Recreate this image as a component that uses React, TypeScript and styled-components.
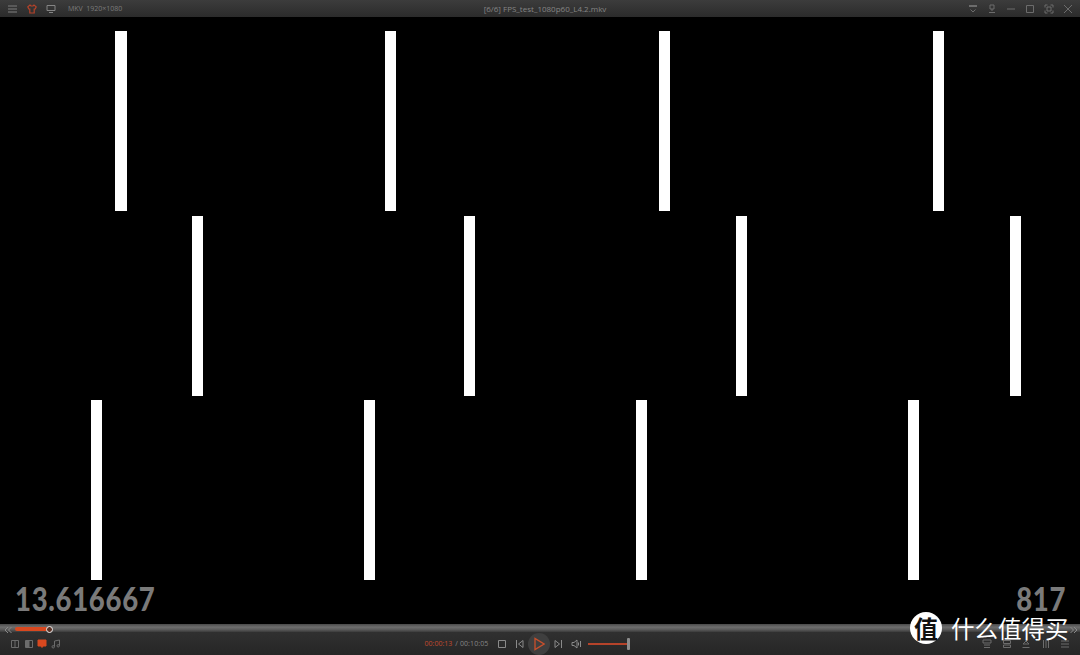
import React from 'react'
import styled, { createGlobalStyle } from 'styled-components'

const GlobalStyle = createGlobalStyle`
  html, body {
    margin: 0;
    padding: 0;
    background: #000;
  }
`

const Window = styled.div`
  width: 1080px;
  height: 655px;
  display: flex;
  flex-direction: column;
  overflow: hidden;
  position: relative;
  font-family: "Open Sans", "Liberation Sans", sans-serif;
`

const TitleBar = styled.div`
  height: 17px;
  flex: none;
  display: grid;
  grid-template-columns: 1fr auto 1fr;
  align-items: center;
  background: linear-gradient(#3c3c3c, #2b2b2b);
  color: #7c7c7c;
  font-size: 7px;
`

const TitleLeft = styled.div`
  display: flex;
  align-items: center;
  padding-left: 7px;
  gap: 9px;
`

const TitleName = styled.div`
  font-size: 8px;
  color: #858585;
  padding-left: 10px;
  white-space: nowrap;
`

const TitleRight = styled.div`
  display: flex;
  align-items: center;
  justify-content: flex-end;
  padding-right: 7px;
  gap: 9px;
`

const Meta = styled.span<{ $gap: number }>`
  margin-left: ${p => p.$gap}px;
  white-space: nowrap;
`

const Video = styled.div`
  flex: 1;
  background: #000;
  position: relative;
`

const Bar = styled.div<{ $x: number; $top: number; $w?: number }>`
  position: absolute;
  left: ${p => p.$x}px;
  top: ${p => p.$top}px;
  width: ${p => p.$w || 11}px;
  height: 180px;
  background: #fff;
`

const Readout = styled.div<{ $side: 'left' | 'right' }>`
  position: absolute;
  bottom: 13px;
  ${p => (p.$side === 'left' ? 'left: 15px;' : 'right: 14px;')}
  transform: scaleX(0.86);
  transform-origin: ${p => p.$side} center;
  font-family: Lato, "Liberation Sans", sans-serif;
  font-weight: 900;
  font-size: 32px;
  line-height: 24px;
  letter-spacing: 0.8px;
  color: #7a7a7a;
`

const Track = styled.div`
  height: 8px;
  flex: none;
  position: relative;
  background: linear-gradient(#4a4a4a 0, #6e6e6e 40%, #5a5a5a 70%, #3c3c3c 100%);
`

const Played = styled.div`
  position: absolute;
  left: 15px;
  top: 3px;
  width: 33px;
  height: 4px;
  border-radius: 2px;
  background: #d9481f;
`

const Knob = styled.div`
  position: absolute;
  left: 46px;
  top: 2px;
  width: 5px;
  height: 5px;
  box-sizing: content-box;
  border: 1px solid #eee;
  border-radius: 50%;
  background: #5a3226;
`

const Chevrons = styled.span<{ $side: 'left' | 'right' }>`
  position: absolute;
  top: 2px;
  ${p => (p.$side === 'left' ? 'left: 4px;' : 'right: 2px;')}
  display: flex;
`

const Controls = styled.div`
  height: 23px;
  flex: none;
  display: grid;
  grid-template-columns: 1fr auto 1fr;
  align-items: center;
  background: linear-gradient(#303030, #262626);
`

const ControlsLeft = styled.div`
  display: flex;
  gap: 3.5px;
  padding-left: 10px;
`

const ControlsCenter = styled.div`
  display: flex;
  align-items: center;
  color: #858585;
  font-size: 7px;
  margin-right: 25px;
`

const ControlsRight = styled.div`
  display: flex;
  justify-content: flex-end;
  gap: 9.5px;
  padding-right: 10px;
`

const Clock = styled.span`
  color: #c24a2e;
  white-space: nowrap;
`

const Total = styled.span`
  white-space: nowrap;
  margin: 0 9px 0 3px;
  letter-spacing: 0.1px;
`

const PlayButton = styled.div`
  width: 22px;
  height: 22px;
  border-radius: 50%;
  background: #3f3f3f;
  display: flex;
  align-items: center;
  justify-content: center;
  margin: 0 3px;
`

const Gap = styled.div<{ $w: number }>`
  width: ${p => p.$w}px;
  flex: none;
`

const Volume = styled.div`
  width: 42px;
  height: 12px;
  margin-left: 6px;
  position: relative;
  &::before {
    content: '';
    position: absolute;
    left: 0;
    right: 2px;
    top: 5px;
    height: 2px;
    background: #b5432a;
  }
  &::after {
    content: '';
    position: absolute;
    right: 0;
    top: 0;
    width: 3px;
    height: 12px;
    background: #8d8d8d;
    border-radius: 1px;
  }
`

const Watermark = styled.div`
  position: absolute;
  left: 910px;
  top: 612px;
  display: flex;
  align-items: center;
  gap: 9px;
  color: #fff;
  font-family: "Noto Sans CJK SC", sans-serif;
`

const Badge = styled.div`
  width: 32px;
  height: 32px;
  border-radius: 50%;
  background: #fff;
  color: #111;
  display: flex;
  align-items: center;
  justify-content: center;
  font-size: 24px;
  font-weight: 700;
  line-height: 1;
`

const Brand = styled.div`
  font-size: 23.5px;
  line-height: 22px;
  white-space: nowrap;
  font-weight: 400;
`

const Icon: React.FC<{ w?: number; h?: number; color?: string; children: React.ReactNode }> = ({
  w = 10,
  h = 10,
  color = '#6c6c6c',
  children,
}) => (
  <svg width={w} height={h} viewBox={`0 0 ${w} ${h}`} fill="none" stroke={color} strokeWidth={1} style={{ flex: 'none', display: 'block' }}>
    {children}
  </svg>
)

const topBars = [115, 385, 659, 933]
const midBars = [192, 464, 736, 1010]
const lowBars = [91, 364, 636, 908]

export default function App() {
  return (
    <Window>
      <GlobalStyle />
      <TitleBar>
        <TitleLeft>
          <Icon w={11}>
            <path d="M1 2h9M1 5h9M1 8h9" stroke="#666" strokeWidth={1.4} />
          </Icon>
          <Icon w={10} color="#b5432a">
            <path d="M3 1 .8 2.800 1.800 5h1v4h4.400V5h1l1-2.200L7 1 6 2H4z" strokeWidth={1.2} />
          </Icon>
          <Icon w={10} color="#858585">
            <path d="M1 1.500h8v5H1zM3 8.500h4" />
          </Icon>
          <Meta $gap={3}>MKV</Meta>
          <Meta $gap={-5.5}>1920×1080</Meta>
        </TitleLeft>
        <TitleName>[6/6] FPS_test_1080p60_L4.2.mkv</TitleName>
        <TitleRight>
          <Icon>
            <path d="M1 2h8" strokeWidth={2} />
            <path d="M2.500 5.500 5 8l2.500-2.500" />
          </Icon>
          <Icon>
            <path d="M3 1h4v4H3zM5 5v2M2 8.500h6" />
          </Icon>
          <Icon>
            <path d="M1 5h8" />
          </Icon>
          <Icon>
            <path d="M1.500 1.500h7v7h-7z" />
          </Icon>
          <Icon>
            <path d="M1 3.500V1h2.500M6.500 1H9v2.500M1 6.500V9h2.500M6.500 9H9V6.500M3 3h4v4H3z" />
          </Icon>
          <Icon>
            <path d="m1 1 8 8M9 1 1 9" />
          </Icon>
        </TitleRight>
      </TitleBar>
      <Video>
        {topBars.map(x => (
          <Bar key={x} $x={x} $top={14} $w={x === 115 ? 12 : 11} />
        ))}
        {midBars.map(x => (
          <Bar key={x} $x={x} $top={199} />
        ))}
        {lowBars.map(x => (
          <Bar key={x} $x={x} $top={383} />
        ))}
        <Readout $side="left">13.616667</Readout>
        <Readout $side="right">817</Readout>
      </Video>
      <Track>
        <Chevrons $side="left">
          <Icon w={8} h={8} color="#8a8a8a">
            <path d="M4 1 1 4l3 3M7.500 1l-3 3 3 3" />
          </Icon>
        </Chevrons>
        <Played />
        <Knob />
        <Chevrons $side="right">
          <Icon w={8} h={8} color="#8a8a8a">
            <path d="m.5 1 3 3-3 3M4 1l3 3-3 3" />
          </Icon>
        </Chevrons>
      </Track>
      <Controls>
        <ControlsLeft>
          <Icon>
            <path d="M1.500 1.500h7v7h-7zM5 1.500v7" />
          </Icon>
          <Icon>
            <path d="M1.500 1.500h7v7h-7z" />
            <path d="M2 2h3v6H2z" fill="#6c6c6c" />
          </Icon>
          <Icon color="#d9481f">
            <path d="M1 1h8v6H6L5 8.500 4 7H1z" fill="#d9481f" />
          </Icon>
          <Icon>
            <path d="M3.500 7.500V2L8.500 1v5.500" />
            <circle cx="2.200" cy="7.800" r="1.200" />
            <circle cx="7.200" cy="6.800" r="1.200" />
          </Icon>
        </ControlsLeft>
        <ControlsCenter>
          <Clock>00:00:13</Clock>
          <Total>/ 00:10:05</Total>
          <Icon color="#8a8a8a">
            <path d="M1.500 1.500h7v7h-7z" />
          </Icon>
          <Gap $w={8} />
          <Icon color="#8a8a8a">
            <path d="M1.500 1v8M8 1.500 3.500 5 8 8.500z" />
          </Icon>
          <PlayButton>
            <Icon w={12} h={14} color="#c9502c">
              <path d="M2 1.500v11L11 7z" strokeWidth={1.3} />
            </Icon>
          </PlayButton>
          <Icon color="#8a8a8a">
            <path d="M8.500 1v8M2 1.500 6.500 5 2 8.500z" />
          </Icon>
          <Gap $w={8} />
          <Icon w={11} color="#8a8a8a">
            <path d="M1 3.500h2L6 1v8L3 6.500H1zM7.500 3.500v3M9.500 2v6" />
          </Icon>
          <Volume />
        </ControlsCenter>
        <ControlsRight>
          <Icon>
            <path d="M1 1h8v3H1zM2 6h6M2 8.500h6" />
          </Icon>
          <Icon>
            <path d="M1.500 1.500h7v3h-7zM1.500 6h7v2.500h-7z" />
          </Icon>
          <Icon>
            <path d="M5 2 8 5H2zM1.500 8.500h7" />
          </Icon>
          <Icon>
            <path d="M2.500 1v8M5 1v8M7.500 1v8" />
          </Icon>
          <Icon>
            <path d="M1 2h8M1 5h8M1 8h8" />
          </Icon>
        </ControlsRight>
      </Controls>
      <Watermark>
        <Badge>值</Badge>
        <Brand>什么值得买</Brand>
      </Watermark>
    </Window>
  )
}
